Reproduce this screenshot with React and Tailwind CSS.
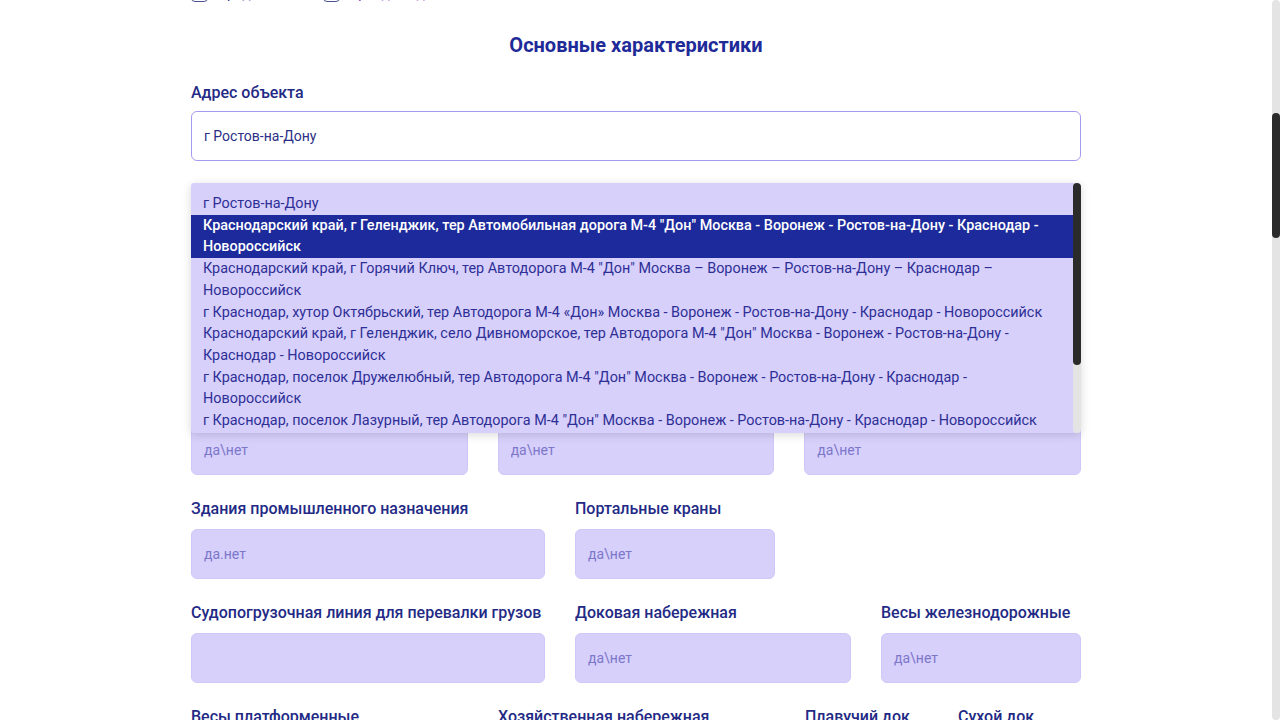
const suggestions = [
  'г Ростов-на-Дону',
  'Краснодарский край, г Геленджик, тер Автомобильная дорога М-4 "Дон" Москва - Воронеж - Ростов-на-Дону - Краснодар - Новороссийск',
  'Краснодарский край, г Горячий Ключ, тер Автодорога М-4 "Дон" Москва – Воронеж – Ростов-на-Дону – Краснодар – Новороссийск',
  'г Краснодар, хутор Октябрьский, тер Автодорога М-4 «Дон» Москва - Воронеж - Ростов-на-Дону - Краснодар - Новороссийск',
  'Краснодарский край, г Геленджик, село Дивноморское, тер Автодорога М-4 "Дон" Москва - Воронеж - Ростов-на-Дону - Краснодар - Новороссийск',
  'г Краснодар, поселок Дружелюбный, тер Автодорога М-4 "Дон" Москва - Воронеж - Ростов-на-Дону - Краснодар - Новороссийск',
  'г Краснодар, поселок Лазурный, тер Автодорога М-4 "Дон" Москва - Воронеж - Ростов-на-Дону - Краснодар - Новороссийск',
  'Ростовская обл, г Ростов-на-Дону, ул Донская',
  'Ростовская обл, Аксайский р-н, тер Автодорога М-4 "Дон" Москва - Воронеж - Ростов-на-Дону - Краснодар - Новороссийск',
];

const rows = [
  [
    { label: 'Площадь участка', w: 'w-[277px]', ph: '' },
    { label: 'Площадь застройки', w: 'w-[277px]', ph: '' },
    { label: 'Кадастровый номер', w: 'w-[277px]', ph: '' },
  ],
  [
    { label: 'Железнодорожные пути', w: 'w-[277px]', ph: 'да\\нет' },
    { label: 'Причальная линия', w: 'w-[277px]', ph: 'да\\нет' },
    { label: 'Склады', w: 'w-[277px]', ph: 'да\\нет' },
  ],
  [
    { label: 'Открытые площадки', w: 'w-[277px]', ph: 'да\\нет' },
    { label: 'Административные здания', w: 'w-[277px]', ph: 'да\\нет' },
    { label: 'Краны', w: 'w-[277px]', ph: 'да\\нет' },
  ],
  [
    { label: 'Здания промышленного назначения', w: 'w-[354px]', ph: 'да.нет' },
    { label: 'Портальные краны', w: 'w-[200px]', ph: 'да\\нет' },
  ],
  [
    { label: 'Судопогрузочная линия для перевалки грузов', w: 'w-[354px]', ph: '' },
    { label: 'Доковая набережная', w: 'w-[276px]', ph: 'да\\нет' },
    { label: 'Весы железнодорожные', w: 'w-[200px]', ph: 'да\\нет' },
  ],
  [
    { label: 'Весы платформенные', w: 'w-[277px]', ph: 'да\\нет' },
    { label: 'Хозяйственная набережная', w: 'w-[277px]', ph: 'да\\нет' },
    { label: 'Плавучий док', w: 'w-[123px]', ph: 'да\\нет' },
    { label: 'Сухой док', w: 'w-[123px]', ph: 'да\\нет' },
  ],
];

function Field({ label, w, ph }) {
  return (
    <div className={`${w} flex flex-col`}>
      <label className="h-[22px] leading-[22px] text-[16px] font-medium text-[#232a85] whitespace-nowrap">{label}</label>
      <input
        placeholder={ph}
        className="mt-[9px] h-[50px] w-full rounded-[6px] border border-[#cfc7f7] bg-[#d7d0fb] px-3 text-[14px] text-[#2b2f86] placeholder:text-[#7d77cb] outline-none"
      />
    </div>
  );
}

export default function App() {
  return (
    <div className="flex h-screen w-full overflow-hidden bg-white font-['Roboto',sans-serif]">
      <div className="flex-1 overflow-hidden">
        <div className="mx-auto w-[890px]">
          <div className="mt-[-15px] flex h-[17px] items-center text-[14px]">
            <div className="flex w-[132px] items-center gap-[9px] text-[#2b2f86]">
              <span className="h-[17px] w-[17px] shrink-0 rounded-[4px] border border-[#4a4f8f]" />
              <span>Продажа</span>
            </div>
            <div className="flex items-center gap-[9px] text-[#8a2bb8]">
              <span className="h-[17px] w-[17px] shrink-0 rounded-[4px] border border-[#4a4f8f]" />
              <span>Аренда недвижимости</span>
            </div>
          </div>

          <h2 className="mt-[32px] text-center text-[20px] leading-[22px] font-bold text-[#1f2a99]">
            Основные характеристики
          </h2>

          <div className="mt-[27px] h-5 leading-5 text-[16px] font-medium text-[#232a85]">Адрес объекта</div>
          <div className="relative mt-[8px]">
            <input
              defaultValue="г Ростов-на-Дону"
              className="h-[50px] w-full rounded-[6px] border border-[#a49cf0] bg-white px-3 text-[14px] text-[#2b2f86] outline-none"
            />
            <div className="absolute left-0 right-0 top-[72px] z-10 flex h-[250px] overflow-hidden rounded-[3px] bg-[#d7d0fb] shadow-[0_2px_10px_rgba(0,0,0,0.15)]">
              <ul className="flex-1 overflow-hidden pt-[10px] text-[14.4px] leading-[21.7px] text-[#2e2f96]">
                {suggestions.map((s, i) => (
                  <li
                    key={i}
                    className={i === 1 ? 'bg-[#1c2a9b] px-3 font-medium text-white' : 'px-3'}
                  >
                    {s}
                  </li>
                ))}
              </ul>
              <div className="flex w-2 flex-col rounded-full bg-[#e4e4e4]">
                <div className="h-[182px] rounded-full bg-[#2b2b2b]" />
              </div>
            </div>
          </div>

          <div className="mt-[25px] flex flex-col gap-y-[23px]">
            {rows.map((r, i) => (
              <div key={i} className="flex gap-x-[30px]">
                {r.map((f) => (
                  <Field key={f.label} {...f} />
                ))}
              </div>
            ))}
          </div>
        </div>
      </div>
      <div className="flex w-2 flex-col rounded-full bg-[#e4e4e4]">
        <div className="mt-[113px] h-[125px] rounded-full bg-[#2b2b2b]" />
      </div>
    </div>
  );
}
